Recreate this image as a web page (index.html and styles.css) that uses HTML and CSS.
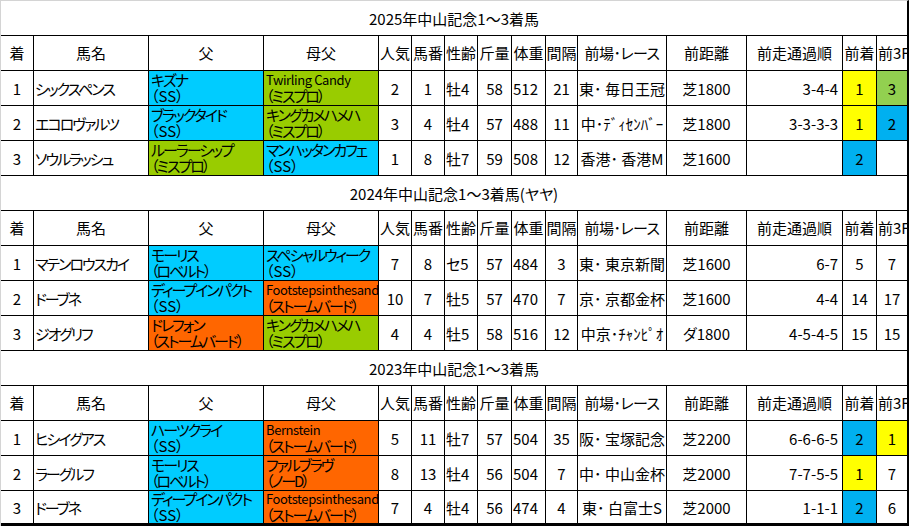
FILE: index.html
```html
<!DOCTYPE html>
<html lang="ja">
<head>
<meta charset="utf-8">
<title>中山記念1～3着馬</title>
<link rel="stylesheet" href="styles.css">
</head>
<body>
<div class="sheet">

  <section class="block">
    <div class="title">2025年中山記念1～3着馬</div>
    <div class="grid">
      <div class="cell c">着</div><div class="cell c">馬名</div><div class="cell c">父</div><div class="cell c">母父</div><div class="cell c">人気</div><div class="cell c">馬番</div><div class="cell c">性齢</div><div class="cell c">斤量</div><div class="cell c">体重</div><div class="cell c">間隔</div><div class="cell c kh">前場･レース</div><div class="cell c">前距離</div><div class="cell c">前走通過順</div><div class="cell c">前着</div><div class="cell l">前3F</div>

      <div class="cell c d">1</div><div class="cell l d kn">シックスペンス</div>
      <div class="cell two sky"><span class="kn">キズナ</span><span class="ks">（SS）</span></div>
      <div class="cell two lime"><span class="lat">Twirling Candy</span><span class="kn">（ミスプロ）</span></div>
      <div class="cell c d">2</div><div class="cell c d">1</div><div class="cell l d">牡4</div><div class="cell c d">58</div><div class="cell l d">512</div><div class="cell c d">21</div><div class="cell c d">東･ 毎日王冠</div><div class="cell c d">芝1800</div><div class="cell r d">3-4-4</div><div class="cell c d yel">1</div><div class="cell c d grn">3</div>

      <div class="cell c d">2</div><div class="cell l d kn">エコロヴァルツ</div>
      <div class="cell two sky"><span class="kn">ブラックタイド</span><span class="ks">（SS）</span></div>
      <div class="cell two lime"><span class="kn">キングカメハメハ</span><span class="kn">（ミスプロ）</span></div>
      <div class="cell c d">3</div><div class="cell c d">4</div><div class="cell l d">牡4</div><div class="cell c d">57</div><div class="cell l d">488</div><div class="cell c d">11</div><div class="cell c d">中･ﾃﾞｨｾﾝﾊﾞｰ</div><div class="cell c d">芝1800</div><div class="cell r d">3-3-3-3</div><div class="cell c d yel">1</div><div class="cell c d blu">2</div>

      <div class="cell c d">3</div><div class="cell l d kn">ソウルラッシュ</div>
      <div class="cell two lime"><span class="kn">ルーラーシップ</span><span class="kn">（ミスプロ）</span></div>
      <div class="cell two sky"><span class="kn">マンハッタンカフェ</span><span class="ks">（SS）</span></div>
      <div class="cell c d">1</div><div class="cell c d">8</div><div class="cell l d">牡7</div><div class="cell c d">59</div><div class="cell l d">508</div><div class="cell c d">12</div><div class="cell c d">香港･ 香港M</div><div class="cell c d">芝1600</div><div class="cell r d"></div><div class="cell c d blu">2</div><div class="cell c d"></div>
    </div>
  </section>

  <section class="block">
    <div class="title">2024年中山記念1～3着馬(ヤヤ)</div>
    <div class="grid">
      <div class="cell c">着</div><div class="cell c">馬名</div><div class="cell c">父</div><div class="cell c">母父</div><div class="cell c">人気</div><div class="cell c">馬番</div><div class="cell c">性齢</div><div class="cell c">斤量</div><div class="cell c">体重</div><div class="cell c">間隔</div><div class="cell c kh">前場･レース</div><div class="cell c">前距離</div><div class="cell c">前走通過順</div><div class="cell c">前着</div><div class="cell l">前3F</div>

      <div class="cell c d">1</div><div class="cell l d kn">マテンロウスカイ</div>
      <div class="cell two sky"><span class="kn">モーリス</span><span class="kn">（ロベルト）</span></div>
      <div class="cell two sky"><span class="kn">スペシャルウィーク</span><span class="ks">（SS）</span></div>
      <div class="cell c d">7</div><div class="cell c d">8</div><div class="cell l d">セ5</div><div class="cell c d">57</div><div class="cell l d">484</div><div class="cell c d">3</div><div class="cell c d">東･ 東京新聞</div><div class="cell c d">芝1600</div><div class="cell r d">6-7</div><div class="cell c d">5</div><div class="cell c d">7</div>

      <div class="cell c d">2</div><div class="cell l d kn">ドーブネ</div>
      <div class="cell two sky"><span class="kn">ディープインパクト</span><span class="ks">（SS）</span></div>
      <div class="cell two org"><span class="lat">Footstepsinthesand</span><span class="kn">（ストームバード）</span></div>
      <div class="cell c d">10</div><div class="cell c d">7</div><div class="cell l d">牡5</div><div class="cell c d">57</div><div class="cell l d">470</div><div class="cell c d">7</div><div class="cell c d">京･ 京都金杯</div><div class="cell c d">芝1600</div><div class="cell r d">4-4</div><div class="cell c d">14</div><div class="cell c d">17</div>

      <div class="cell c d">3</div><div class="cell l d kn">ジオグリフ</div>
      <div class="cell two org"><span class="kn">ドレフォン</span><span class="kn">（ストームバード）</span></div>
      <div class="cell two lime"><span class="kn">キングカメハメハ</span><span class="kn">（ミスプロ）</span></div>
      <div class="cell c d">4</div><div class="cell c d">4</div><div class="cell l d">牡5</div><div class="cell c d">58</div><div class="cell l d">516</div><div class="cell c d">12</div><div class="cell c d">中京･ﾁｬﾝﾋﾟｵ</div><div class="cell c d">ダ1800</div><div class="cell r d">4-5-4-5</div><div class="cell c d">15</div><div class="cell c d">15</div>
    </div>
  </section>

  <section class="block">
    <div class="title">2023年中山記念1～3着馬</div>
    <div class="grid last">
      <div class="cell c">着</div><div class="cell c">馬名</div><div class="cell c">父</div><div class="cell c">母父</div><div class="cell c">人気</div><div class="cell c">馬番</div><div class="cell c">性齢</div><div class="cell c">斤量</div><div class="cell c">体重</div><div class="cell c">間隔</div><div class="cell c kh">前場･レース</div><div class="cell c">前距離</div><div class="cell c">前走通過順</div><div class="cell c">前着</div><div class="cell l">前3F</div>

      <div class="cell c d">1</div><div class="cell l d kn">ヒシイグアス</div>
      <div class="cell two sky"><span class="kn">ハーツクライ</span><span class="ks">（SS）</span></div>
      <div class="cell two org"><span class="lat">Bernstein</span><span class="kn">（ストームバード）</span></div>
      <div class="cell c d">5</div><div class="cell c d">11</div><div class="cell l d">牡7</div><div class="cell c d">57</div><div class="cell l d">504</div><div class="cell c d">35</div><div class="cell c d">阪･ 宝塚記念</div><div class="cell c d">芝2200</div><div class="cell r d">6-6-6-5</div><div class="cell c d blu">2</div><div class="cell c d yel">1</div>

      <div class="cell c d">2</div><div class="cell l d kn">ラーグルフ</div>
      <div class="cell two sky"><span class="kn">モーリス</span><span class="kn">（ロベルト）</span></div>
      <div class="cell two org"><span class="kn">ファルブラヴ</span><span class="kn">（ノーD）</span></div>
      <div class="cell c d">8</div><div class="cell c d">13</div><div class="cell l d">牡4</div><div class="cell c d">56</div><div class="cell l d">504</div><div class="cell c d">7</div><div class="cell c d">中･ 中山金杯</div><div class="cell c d">芝2000</div><div class="cell r d">7-7-5-5</div><div class="cell c d yel">1</div><div class="cell c d">7</div>

      <div class="cell c d">3</div><div class="cell l d kn">ドーブネ</div>
      <div class="cell two sky"><span class="kn">ディープインパクト</span><span class="ks">（SS）</span></div>
      <div class="cell two org"><span class="lat">Footstepsinthesand</span><span class="kn">（ストームバード）</span></div>
      <div class="cell c d">7</div><div class="cell c d">4</div><div class="cell l d">牡4</div><div class="cell c d">56</div><div class="cell l d">474</div><div class="cell c d">4</div><div class="cell c d">東･ 白富士S</div><div class="cell c d">芝2000</div><div class="cell r d">1-1-1</div><div class="cell c d blu">2</div><div class="cell c d">6</div>
    </div>
  </section>

</div>
</body>
</html>
```

FILE: styles.css
```css
html, body {
  margin: 0;
  padding: 0;
  background: #ffffff;
}

body {
  font-family: "Noto Sans CJK JP", "Noto Sans", sans-serif;
  font-size: 15px;
  color: #000000;
  font-feature-settings: "palt";
  width: 909px;
  height: 526px;
  overflow: hidden;
}

.sheet {
  width: 906px;
  border-top: 1px solid #d4d4d4;
  border-left: 1px solid #d4d4d4;
  border-right: 2px solid #000000;
}

.title {
  height: 35px;
  box-sizing: border-box;
  border-bottom: 1px solid #000000;
  display: flex;
  align-items: center;
  justify-content: center;
  line-height: 16px;
  padding-top: 2px;
}

.grid {
  display: grid;
  grid-template-columns: 32px 114px 114px 114px 32px 32px 32px 33px 33px 31px 88px 79px 95px 33px 30px;
  grid-auto-rows: 34px;
  gap: 1px;
  background: #000000;
  padding-bottom: 1px;
}

.grid.last {
  grid-template-rows: 34px 34px 34px 32px;
  padding-bottom: 3px;
}

.cell {
  background: #ffffff;
  display: flex;
  align-items: center;
  white-space: nowrap;
  overflow: hidden;
  line-height: 16px;
}

.c { justify-content: center; }
.l { justify-content: flex-start; padding-left: 1px; }
.r { justify-content: flex-end; padding-right: 4px; }

.d { padding-top: 2px; box-sizing: border-box; }

.kn { letter-spacing: -2px; }
.ks { letter-spacing: 0; }
.kh { letter-spacing: -0.5px; }

.two {
  flex-direction: column;
  align-items: flex-start;
  justify-content: center;
  padding-left: 2px;
  box-sizing: border-box;
  overflow: visible;
}

.two span {
  display: block;
  line-height: 16px;
}

.lat {
  font-size: 13px;
  letter-spacing: -0.4px;
}

.sky { background: #00ccff; }
.lime { background: #99cc00; }
.org { background: #ff6600; }
.yel { background: #ffff00; }
.grn { background: #92d050; }
.blu { background: #00b0f0; }
```
